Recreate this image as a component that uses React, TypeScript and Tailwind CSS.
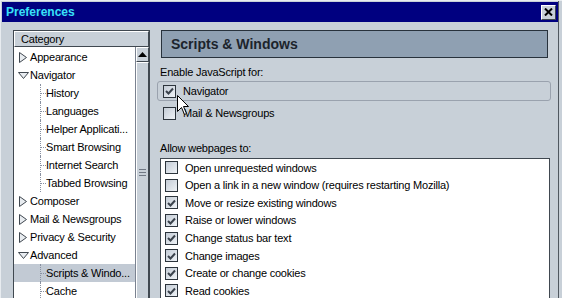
import type { ReactNode } from 'react'

type TreeItem = { label: string; level: 0 | 1; twisty?: 'open' | 'closed'; selected?: boolean }

const tree: TreeItem[] = [
  { label: 'Appearance', level: 0, twisty: 'closed' },
  { label: 'Navigator', level: 0, twisty: 'open' },
  { label: 'History', level: 1 },
  { label: 'Languages', level: 1 },
  { label: 'Helper Applicati...', level: 1 },
  { label: 'Smart Browsing', level: 1 },
  { label: 'Internet Search', level: 1 },
  { label: 'Tabbed Browsing', level: 1 },
  { label: 'Composer', level: 0, twisty: 'closed' },
  { label: 'Mail & Newsgroups', level: 0, twisty: 'closed' },
  { label: 'Privacy & Security', level: 0, twisty: 'closed' },
  { label: 'Advanced', level: 0, twisty: 'open' },
  { label: 'Scripts & Windo...', level: 1, selected: true },
  { label: 'Cache', level: 1 },
]

const permissions = [
  { label: 'Open unrequested windows', checked: false },
  { label: 'Open a link in a new window (requires restarting Mozilla)', checked: false },
  { label: 'Move or resize existing windows', checked: true },
  { label: 'Raise or lower windows', checked: true },
  { label: 'Change status bar text', checked: true },
  { label: 'Change images', checked: true },
  { label: 'Create or change cookies', checked: true },
  { label: 'Read cookies', checked: true },
]

function Checkbox({ checked }: { checked: boolean }) {
  return (
    <span className="flex h-[13px] w-[13px] shrink-0 items-center justify-center border border-[#2c343c] bg-gradient-to-br from-[#c4ccd6] to-[#eef2f6]">
      {checked && (
        <svg width="9" height="8" viewBox="0 0 9 8">
          <path d="M1 4 L3.5 6.5 L8 1.5" fill="none" stroke="#3a424c" strokeWidth="2" />
        </svg>
      )}
    </span>
  )
}

function Twisty({ open }: { open: boolean }) {
  return open ? (
    <svg width="11" height="7" viewBox="0 0 11 7" className="shrink-0">
      <path d="M0.5 0.5 L10.5 0.5 L5.5 6.5 Z" fill="#e8ecf0" stroke="#404850" />
    </svg>
  ) : (
    <svg width="8" height="11" viewBox="0 0 8 11" className="ml-[1px] mr-[2px] shrink-0">
      <path d="M0.5 0.5 L7.5 5.5 L0.5 10.5 Z" fill="#e8ecf0" stroke="#404850" />
    </svg>
  )
}

function TreeRow({ item }: { item: TreeItem }) {
  if (item.level === 0) {
    return (
      <div className="flex h-[18px] items-center pl-[4px] whitespace-nowrap">
        <Twisty open={item.twisty === 'open'} />
        <span className="ml-[1px]">{item.label}</span>
      </div>
    )
  }
  return (
    <div className={`relative flex h-[18px] items-center whitespace-nowrap pl-[32px] ${item.selected ? 'bg-[#c2cad4]' : ''}`}>
      <span className="absolute left-[26px] top-0 h-full border-l border-dotted border-[#8890a0]" />
      <span className="absolute left-[27px] top-[9px] w-[5px] border-t border-dotted border-[#8890a0]" />
      {item.label}
    </div>
  )
}

function Bevel({ children, className = '' }: { children?: ReactNode; className?: string }) {
  return (
    <div className={`border border-t-white border-l-white border-r-[#404850] border-b-[#404850] bg-[#c8d0d8] ${className}`}>
      {children}
    </div>
  )
}

export default function App() {
  return (
    <div className="relative h-[298px] w-[562px] overflow-hidden border-l border-t border-[#e8ecf0] bg-[#c8d0d8] pl-[1px] pr-[3px] pt-[1px] font-['Liberation_Sans',Arial,sans-serif] text-[11px] tracking-[-0.2px] text-black">
      <div className="absolute right-[3px] top-0 h-full border-r border-[#505860]" />
      <div className="flex h-[20px] items-center justify-between bg-[#000080] pl-[4px] pr-[3px]">
        <span className="text-[12px] font-bold tracking-normal text-[#38e0f8]">Preferences</span>
        <Bevel className="flex h-[15px] w-[15px] items-center justify-center">
          <svg width="9" height="8" viewBox="0 0 9 8">
            <path d="M1 0.5 L8 7.5 M8 0.5 L1 7.5" stroke="#000" strokeWidth="2" />
          </svg>
        </Bevel>
      </div>

      <div className="mt-[8px] flex gap-[7px] pl-[11px]">
        <div className="h-[280px] w-[137px] shrink-0 border border-[#404850] bg-white">
          <Bevel className="flex h-[16px] items-center pl-[6px]">Category</Bevel>
          <div className="flex">
            <div className="w-[121px] pt-px">
              {tree.map((item) => (
                <TreeRow key={item.label} item={item} />
              ))}
            </div>
            <div className="flex w-[14px] flex-col border-l border-[#7a8290] bg-[#b8c0ca]">
              <Bevel className="flex h-[15px] items-center justify-center">
                <svg width="9" height="5" viewBox="0 0 9 5">
                  <path d="M0 5 L4.5 0 L9 5 Z" fill="#000" />
                </svg>
              </Bevel>
              <Bevel className="flex h-[260px] flex-col items-center justify-center gap-[2px] pb-[40px]">
                <span className="h-px w-[7px] bg-[#707884]" />
                <span className="h-px w-[7px] bg-[#707884]" />
                <span className="h-px w-[7px] bg-[#707884]" />
              </Bevel>
            </div>
          </div>
        </div>

        <div className="flex w-[394px] flex-col">
          <div className="mx-[4px] mr-[3px] flex h-[28px] items-center border border-[#28323c] bg-[#8fa0b2] pl-[9px] text-[14px] font-bold tracking-normal text-[#1c242c]">
            Scripts &amp; Windows
          </div>
          <div className="mt-[7px] h-[14px] pl-[3px] leading-[14px]">Enable JavaScript for:</div>
          <div className="mt-[2px] flex h-[20px] items-center gap-[7px] rounded-[3px] border border-[#9aa2ae] pl-[5px]">
            <Checkbox checked />
            <span>Navigator</span>
          </div>
          <div className="mt-[2px] flex h-[20px] items-center gap-[7px] pl-[6px]">
            <Checkbox checked={false} />
            <span>Mail &amp; Newsgroups</span>
          </div>
          <div className="mt-[18px] h-[14px] pl-[3px] leading-[14px]">Allow webpages to:</div>
          <div className="ml-[3px] mr-[1px] mt-[3px] h-[200px] border border-[#404850] bg-white">
            {permissions.map((p) => (
              <div key={p.label} className="flex h-[17.6px] items-center gap-[7px] whitespace-nowrap pl-[4px]">
                <Checkbox checked={p.checked} />
                <span>{p.label}</span>
              </div>
            ))}
          </div>
        </div>
      </div>

      <svg width="13" height="21" viewBox="0 0 13 21" className="absolute left-[176px] top-[94px]">
        <path d="M0.5 0.5 L0.5 16.5 L4.5 12.5 L7.5 19.5 L9.5 18.5 L6.5 11.5 L11.5 11.5 Z" fill="#fff" stroke="#000" strokeLinejoin="round" />
      </svg>
    </div>
  )
}
